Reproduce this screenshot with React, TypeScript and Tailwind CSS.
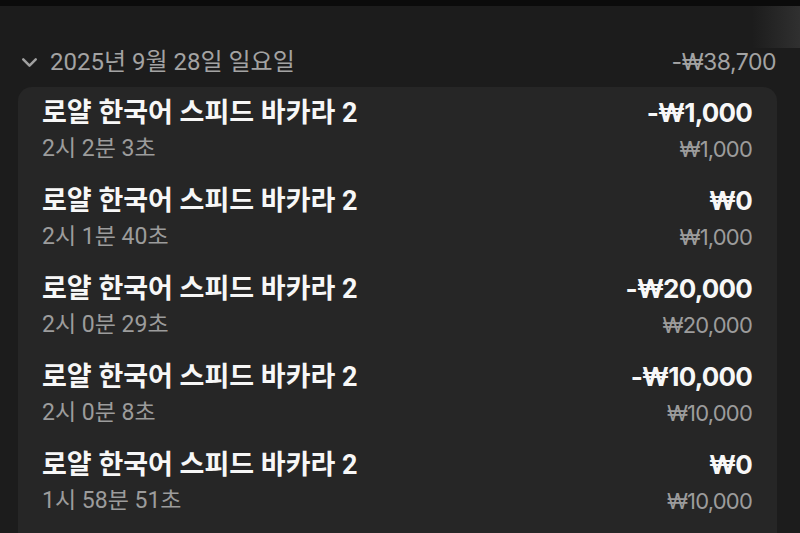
import { ChevronDown } from 'lucide-react';

const rows = [
  { title: '로얄 한국어 스피드 바카라 2', time: '2시 2분 3초', amount: '-₩1,000', bet: '₩1,000' },
  { title: '로얄 한국어 스피드 바카라 2', time: '2시 1분 40초', amount: '₩0', bet: '₩1,000' },
  { title: '로얄 한국어 스피드 바카라 2', time: '2시 0분 29초', amount: '-₩20,000', bet: '₩20,000' },
  { title: '로얄 한국어 스피드 바카라 2', time: '2시 0분 8초', amount: '-₩10,000', bet: '₩10,000' },
  { title: '로얄 한국어 스피드 바카라 2', time: '1시 58분 51초', amount: '₩0', bet: '₩10,000' },
];

const kr = "font-['Roboto','Noto_Sans_CJK_KR',sans-serif]";
const num = "font-['Inter','Noto_Sans_CJK_KR',sans-serif]";

export default function App() {
  return (
    <div className="w-[800px] h-[533px] overflow-hidden bg-[#1c1c1c] flex flex-col">
      {/* top strip */}
      <div className="h-[6px] shrink-0 bg-[#0b0b0b]" />
      <div className="h-[42px] shrink-0 flex justify-end">
        <div className="w-[48px] h-full bg-gradient-to-r from-transparent to-[#303030]" />
      </div>

      {/* date header */}
      <div className="h-[28px] shrink-0 flex items-center justify-between pl-[17px] pr-[24px]">
        <div className="flex items-center gap-[8px]">
          <ChevronDown className="w-[25px] h-[25px] text-[#a0a0a0]" strokeWidth={2.4} />
          <span className={`${kr} text-[24px] text-[#a3a3a3]`}>2025년 9월 28일 일요일</span>
        </div>
        <span className={`${num} text-[23px] text-[#a3a3a3] tracking-[-0.5px]`}>-₩38,700</span>
      </div>

      {/* card, runs past the bottom edge */}
      <div className="mt-[11px] ml-[18px] w-[759px] shrink-0 rounded-[14px] bg-[#262626] flex flex-col pb-[40px]">
        {rows.map((r, i) => (
          <div key={i} className="flex justify-between pl-[24px] pr-[25px] py-[10px]">
            <div className="flex flex-col">
              <span className={`${kr} text-[27px] leading-[32px] font-bold text-[#f7f7f7]`}>{r.title}</span>
              <span className={`${kr} mt-[4px] text-[23px] leading-[32px] text-[#9c9c9c]`}>{r.time}</span>
            </div>
            <div className="flex flex-col items-end">
              <span className={`${num} text-[26px] leading-[32px] font-bold text-[#f7f7f7] tracking-[-0.8px]`}>{r.amount}</span>
              <span className={`${num} mt-[4px] text-[22px] leading-[32px] text-[#9c9c9c] tracking-[-0.8px]`}>{r.bet}</span>
            </div>
          </div>
        ))}
      </div>
    </div>
  );
}
